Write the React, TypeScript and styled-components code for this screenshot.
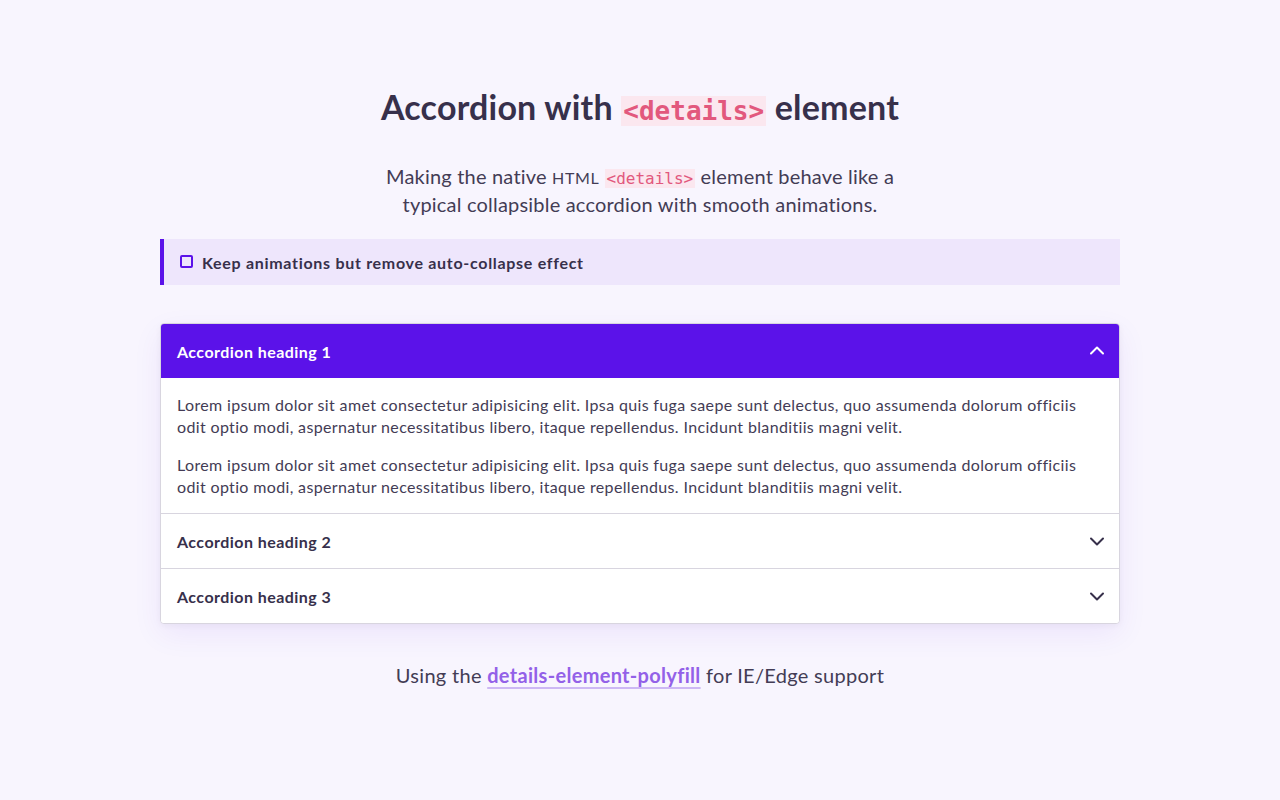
import React, { useState } from 'react';
import styled, { createGlobalStyle } from 'styled-components';

const GlobalStyle = createGlobalStyle`
  html, body {
    margin: 0;
    padding: 0;
    background: #f8f5fe;
  }
  body {
    font-family: Lato, "Noto Sans", sans-serif;
    color: #37304b;
  }
`;

const Page = styled.main`
  width: 960px;
  margin: 0 auto;
  padding-top: 86px;
  display: flex;
  flex-direction: column;
  align-items: center;
`;

const Title = styled.h1`
  margin: 0;
  font-size: 34px;
  line-height: 42px;
  font-weight: 700;
  letter-spacing: 0.2px;
  color: #37304b;
`;

const Code = styled.code<{ $small?: boolean }>`
  font-family: "DejaVu Sans Mono", monospace;
  font-weight: ${({ $small }) => ($small ? 400 : 700)};
  font-size: ${({ $small }) => ($small ? '16px' : '26px')};
  letter-spacing: 0;
  line-height: 1.15;
  color: #e2587d;
  background: #fbe7ef;
  padding: 0 2px;
`;

const Lead = styled.p`
  margin: 35px 0 0;
  width: 520px;
  text-align: center;
  font-size: 20px;
  line-height: 27px;
  color: #433c55;
  letter-spacing: 0.2px;
`;

const Abbr = styled.span`
  font-size: 16px;
  letter-spacing: 0.6px;
`;

const Toggle = styled.label`
  box-sizing: border-box;
  width: 100%;
  margin-top: 21px;
  height: 46px;
  display: flex;
  align-items: center;
  gap: 9px;
  padding-left: 16px;
  background: #eee6fc;
  border-left: 4px solid #5b12e9;
  font-size: 16px;
  font-weight: 700;
  letter-spacing: 0.7px;
  color: #37304b;
  cursor: pointer;
`;

const Box = styled.span<{ $on: boolean }>`
  width: 9px;
  height: 9px;
  border: 2px solid #5b12e9;
  border-radius: 2px;
  background: ${({ $on }) => ($on ? '#5b12e9' : 'transparent')};
  margin-top: -2px;
`;

const Accordion = styled.div`
  width: 100%;
  box-sizing: border-box;
  margin-top: 38px;
  background: #fff;
  border: 1px solid #d8d5df;
  border-radius: 4px;
  overflow: hidden;
  box-shadow: 0 10px 30px rgba(91, 18, 233, 0.07), 0 2px 6px rgba(0, 0, 0, 0.04);
`;

const Item = styled.div`
  & + & {
    border-top: 1px solid #d8d5df;
  }
`;

const Summary = styled.button<{ $open: boolean }>`
  width: 100%;
  height: 54px;
  display: flex;
  align-items: center;
  justify-content: space-between;
  padding: 0 13px 0 16px;
  border: 0;
  background: ${({ $open }) => ($open ? '#5b12e9' : '#fff')};
  color: ${({ $open }) => ($open ? '#fff' : '#37304b')};
  font-family: inherit;
  font-size: 16px;
  font-weight: 700;
  letter-spacing: 0.45px;
  cursor: pointer;
  text-align: left;
`;

const Body = styled.div`
  padding: 16px 16px 15px;
  display: flex;
  flex-direction: column;
  gap: 16px;
  & p {
    margin: 0;
    font-size: 16px;
    line-height: 22px;
    letter-spacing: 0.35px;
    color: #433c55;
  }
`;

const Footer = styled.p`
  margin: 37px 0 0;
  font-size: 20px;
  line-height: 28px;
  letter-spacing: 0.3px;
  color: #433c55;
`;

const Link = styled.a`
  color: #9361e8;
  font-weight: 700;
  text-decoration: underline;
  text-decoration-color: #cdb8f4;
  text-decoration-thickness: 2px;
  text-underline-offset: 4px;
`;

const Chevron = ({ up }: { up: boolean }) => (
  <svg width="18" height="18" viewBox="0 0 18 18" fill="none">
    <path
      d={up ? 'M3 11.5 9 5.5l6 6' : 'M3 6.5l6 6 6-6'}
      stroke="currentColor"
      strokeWidth="2"
      strokeLinecap="round"
      strokeLinejoin="round"
    />
  </svg>
);

const lorem =
  'Lorem ipsum dolor sit amet consectetur adipisicing elit. Ipsa quis fuga saepe sunt delectus, quo assumenda dolorum officiis odit optio modi, aspernatur necessitatibus libero, itaque repellendus. Incidunt blanditiis magni velit.';

export default function App() {
  const [open, setOpen] = useState<number | null>(0);
  const [keep, setKeep] = useState(false);

  return (
    <>
      <GlobalStyle />
      <Page>
        <Title>
          Accordion with <Code>&lt;details&gt;</Code> element
        </Title>
        <Lead>
          Making the native <Abbr>HTML</Abbr> <Code $small>&lt;details&gt;</Code> element behave like a
          typical collapsible accordion with smooth animations.
        </Lead>
        <Toggle onClick={() => setKeep(!keep)}>
          <Box $on={keep} />
          Keep animations but remove auto-collapse effect
        </Toggle>
        <Accordion>
          {[1, 2, 3].map((n, i) => (
            <Item key={n}>
              <Summary $open={open === i} onClick={() => setOpen(open === i ? null : i)}>
                Accordion heading {n}
                <Chevron up={open === i} />
              </Summary>
              {open === i && (
                <Body>
                  <p>{lorem}</p>
                  <p>{lorem}</p>
                </Body>
              )}
            </Item>
          ))}
        </Accordion>
        <Footer>
          Using the <Link href="#">details-element-polyfill</Link> for IE/Edge support
        </Footer>
      </Page>
    </>
  );
}
